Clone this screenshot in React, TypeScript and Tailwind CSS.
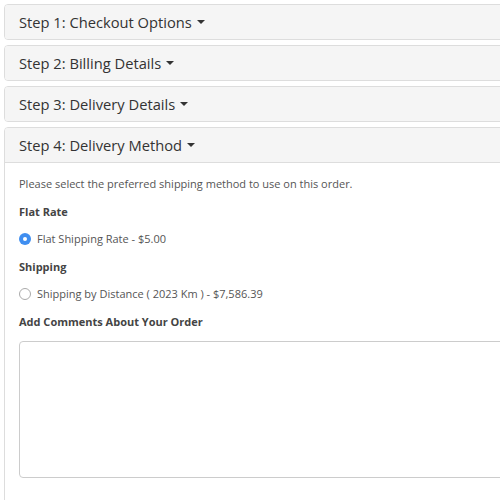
import React from "react";

const steps = [
  "Step 1: Checkout Options",
  "Step 2: Billing Details",
  "Step 3: Delivery Details",
];

function Caret() {
  return (
    <span className="ml-[5px] inline-block h-0 w-0 border-x-[4px] border-t-[4px] border-x-transparent border-t-[#333] align-middle" />
  );
}

function PanelHeading({ title }: { title: string }) {
  return (
    <div className="flex h-[34px] items-center bg-[#f5f5f5] px-[14px] text-[14.7px] text-[#333]">
      <span>{title}</span>
      <Caret />
    </div>
  );
}

function Radio({ checked }: { checked?: boolean }) {
  return checked ? (
    <span className="flex h-[12px] w-[12px] shrink-0 items-center justify-center rounded-full bg-[#3f8ef0]">
      <span className="h-[4px] w-[4px] rounded-full bg-white" />
    </span>
  ) : (
    <span className="h-[12px] w-[12px] shrink-0 rounded-full border border-[#aaa] bg-white" />
  );
}

export default function App() {
  return (
    <div
      className="h-[500px] w-[500px] overflow-hidden bg-white pl-[4px] pt-[4px]"
      style={{ fontFamily: '"Open Sans", "Liberation Sans", sans-serif' }}
    >
      <div className="flex w-[540px] flex-col gap-[5px]">
        {steps.map((s) => (
          <div key={s} className="overflow-hidden rounded-[4px] border border-[#ddd]">
            <PanelHeading title={s} />
          </div>
        ))}

        <div className="overflow-hidden rounded-t-[4px] border border-[#ddd]">
          <div className="border-b border-[#ddd]">
            <PanelHeading title="Step 4: Delivery Method" />
          </div>
          <div className="flex h-[400px] flex-col gap-[11.5px] px-[14px] pt-[13px] text-[11px] leading-[16px] text-[#555]">
            <p>Please select the preferred shipping method to use on this order.</p>
            <p className="font-bold text-[#444]">Flat Rate</p>
            <label className="flex items-center gap-[6px]">
              <Radio checked />
              <span>Flat Shipping Rate - $5.00</span>
            </label>
            <p className="font-bold text-[#444]">Shipping</p>
            <label className="flex items-center gap-[6px]">
              <Radio />
              <span>Shipping by Distance ( 2023 Km ) - $7,586.39</span>
            </label>
            <p className="font-bold text-[#444]">Add Comments About Your Order</p>
            <textarea className="h-[137px] w-full shrink-0 resize-none rounded-[4px] border border-[#ccc] bg-white outline-none" />
          </div>
        </div>
      </div>
    </div>
  );
}
